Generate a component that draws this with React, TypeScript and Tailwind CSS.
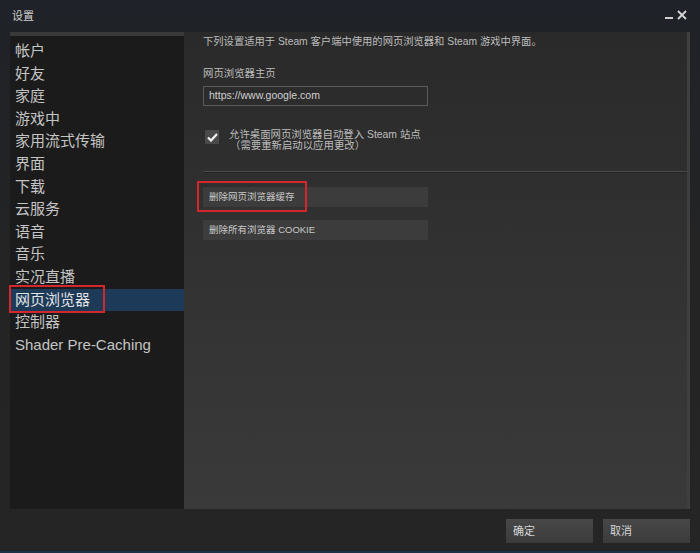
const NAV_ITEMS = [
  "帐户",
  "好友",
  "家庭",
  "游戏中",
  "家用流式传输",
  "界面",
  "下载",
  "云服务",
  "语音",
  "音乐",
  "实况直播",
  "网页浏览器",
  "控制器",
  "Shader Pre-Caching",
]

const ACTIVE = "网页浏览器"

const font = "font-['Liberation_Sans','Noto_Sans_CJK_SC',sans-serif]"

function ActionButton({ label, marked }: { label: string; marked?: boolean }) {
  return (
    <div className="relative">
      <div className="flex h-[20px] w-[225px] items-center bg-[#3c3c3c] pl-[6px] text-[9.5px] text-[#c9c9c9]">
        {label}
      </div>
      {marked && (
        <div className="absolute left-[-6px] top-[-6px] h-[31px] w-[110px] border-2 border-[#d3262d]" />
      )}
    </div>
  )
}

export default function App() {
  return (
    <div
      className={`${font} flex h-[553px] w-[700px] flex-col bg-gradient-to-b from-[#1f2228] via-[#242424] to-[#252525] text-[#c6c6c6]`}
    >
      {/* Title bar */}
      <div className="flex h-[32px] items-start justify-between px-[12px] pt-[8px]">
        <span className="text-[11px] text-[#cfcfcf]">设置</span>
        <div className="flex items-start gap-[4px] pr-[1px] text-[#d0d0d0]">
          <span className="mt-[9px] h-[1.5px] w-[8px] bg-[#cfcfcf]" />
          <svg width="10" height="10" viewBox="0 0 10 10" className="mt-[2px]">
            <path d="M1 1 L9 9 M9 1 L1 9" stroke="#d6d6d6" strokeWidth="1.8" />
          </svg>
        </div>
      </div>

      <div className="flex h-[477px] pl-[10px] pr-[10px]">
        {/* Sidebar */}
        <div className="relative flex w-[174px] flex-col bg-[#1b1b1b]">
          <div className="h-[4px] bg-[#3a3a3a]" />
          <div className="flex flex-col pt-[4px]">
            {NAV_ITEMS.map((item) => (
              <div
                key={item}
                className={`relative h-[22.6px] pl-[5px] text-[15px] leading-[22.6px] ${
                  item === ACTIVE ? "bg-[#1d3a58] text-[#e2e2e2]" : "text-[#c4c4c4]"
                }`}
              >
                {item}
                {item === ACTIVE && (
                  <div className="absolute left-[-1px] top-[-4px] h-[28px] w-[96px] border-2 border-[#d3262d]" />
                )}
              </div>
            ))}
          </div>
        </div>

        {/* Content panel */}
        <div className="flex flex-1 flex-col bg-gradient-to-b from-[#2a2a2a] to-[#3a3a3a] pl-[19px] pt-[3px] border-r-[3px] border-[#3f3f3f]">
          <p className="text-[10.3px] leading-[14px] text-[#bdbdbd]">
            下列设置适用于 Steam 客户端中使用的网页浏览器和 Steam 游戏中界面。
          </p>

          <p className="mt-[18px] text-[10.4px] leading-[14px] text-[#bdbdbd]">网页浏览器主页</p>
          <div className="mt-[5px] flex h-[20px] w-[225px] items-center border border-[#5a5a5a] pl-[5px] text-[10.5px] text-[#d0d0d0]">
            https://www.google.com
          </div>

          <div className="mt-[23px] flex items-start gap-[10px] pl-[2px]">
            <div className="mt-[1px] flex h-[14px] w-[14px] items-center justify-center bg-[#4a4a4a]">
              <svg width="11" height="9" viewBox="0 0 11 9">
                <path d="M1 4.5 L4 7.5 L10 1" fill="none" stroke="#f2f2f2" strokeWidth="2.2" />
              </svg>
            </div>
            <div className="text-[10.4px] leading-[11px] text-[#bdbdbd]">
              <div>允许桌面网页浏览器自动登入 Steam 站点</div>
              <div className="pl-[1px]">（需要重新启动以应用更改）</div>
            </div>
          </div>

          <div className="mt-[20px] h-[2px] border-t border-[#4a4a4a] bg-[#232323]" />

          <div className="mt-[14px] flex flex-col gap-[13px]">
            <ActionButton label="删除网页浏览器缓存" marked />
            <ActionButton label="删除所有浏览器 COOKIE" />
          </div>
        </div>
      </div>

      {/* Footer */}
      <div className="flex flex-1 items-start justify-end gap-[10px] pr-[10px] pt-[10px]">
        {["确定", "取消"].map((label) => (
          <div
            key={label}
            className="flex h-[24px] w-[87px] items-center bg-gradient-to-b from-[#474747] to-[#3b3b3b] pl-[7px] text-[11px] text-[#d6d6d6]"
          >
            {label}
          </div>
        ))}
      </div>
      <div className="h-[2px] bg-[#1e3446]" />
    </div>
  )
}
